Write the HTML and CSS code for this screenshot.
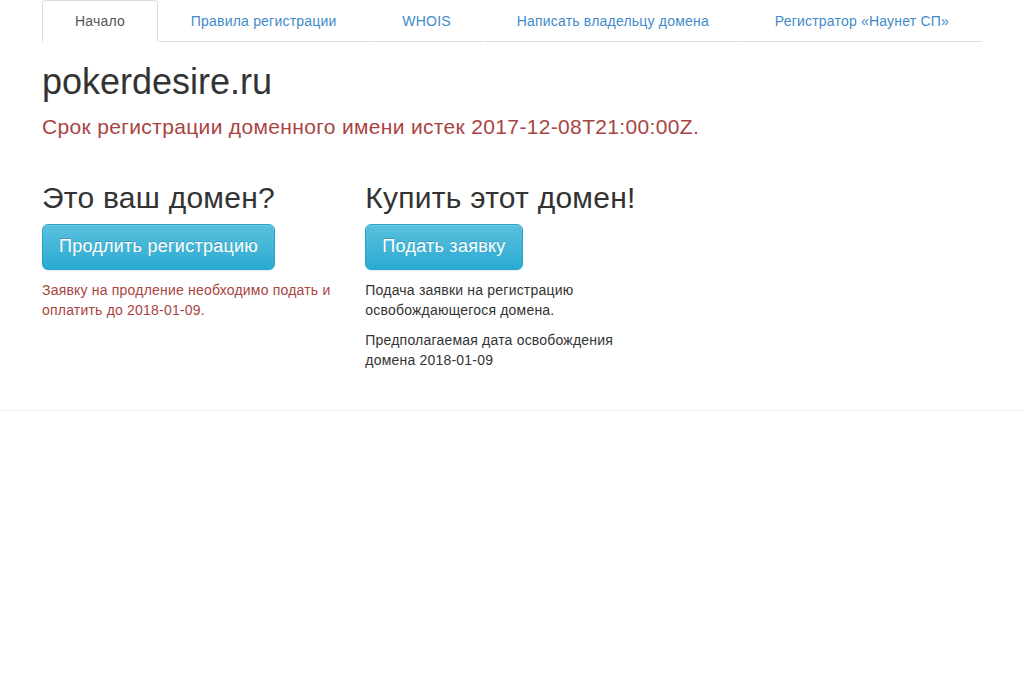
FILE: index.html
```html
<!DOCTYPE html>
<html lang="ru">
<head>
<meta charset="utf-8">
<title>pokerdesire.ru</title>
<link rel="stylesheet" href="styles.css">
</head>
<body>
<div class="container">
  <ul class="tabs">
    <li class="tab active"><a href="#">Начало</a></li>
    <li class="tab"><a href="#">Правила регистрации</a></li>
    <li class="tab"><a href="#">WHOIS</a></li>
    <li class="tab"><a href="#">Написать владельцу домена</a></li>
    <li class="tab"><a href="#">Регистратор «Наунет СП»</a></li>
  </ul>
  <h1 class="domain">pokerdesire.ru</h1>
  <p class="lead danger">Срок регистрации доменного имени истек 2017-12-08T21:00:00Z.</p>
  <div class="row">
    <div class="col">
      <h2>Это ваш домен?</h2>
      <div class="btn-wrap"><a class="btn" href="#">Продлить регистрацию</a></div>
      <p class="danger">Заявку на продление необходимо подать и оплатить до 2018-01-09.</p>
    </div>
    <div class="col">
      <h2>Купить этот домен!</h2>
      <div class="btn-wrap"><a class="btn" href="#">Подать заявку</a></div>
      <p>Подача заявки на регистрацию освобождающегося домена.</p>
      <p>Предполагаемая дата освобождения домена 2018-01-09</p>
    </div>
  </div>
</div>
<hr class="rule">
</body>
</html>
```

FILE: styles.css
```css
* { box-sizing: border-box; }
html, body { margin: 0; padding: 0; }
body {
  font-family: "Liberation Sans", Arial, sans-serif;
  font-size: 14px;
  line-height: 20px;
  letter-spacing: 0.2px;
  color: #333;
  background: #fff;
}
a { text-decoration: none; color: #428bca; }
.container {
  width: 970px;
  margin: 0 auto;
  padding: 0 15px;
}
.tabs {
  display: flex;
  width: 100%;
  margin: 0;
  padding: 0;
  list-style: none;
}
.tab {
  flex: 1 1 auto;
  text-align: center;
  white-space: nowrap;
}
.tab a {
  display: block;
  padding: 10px 15px;
  line-height: 20px;
  border: 1px solid transparent;
  border-bottom: 1px solid #ddd;
  border-radius: 4px 4px 0 0;
  color: #428bca;
}
.tab.active a {
  color: #555;
  background: #fff;
  border: 1px solid #ddd;
  border-bottom-color: #fff;
}
.domain {
  font-size: 36px;
  font-weight: 500;
  line-height: 1.1;
  letter-spacing: 0;
  margin: 20px 0 10px;
}
.lead {
  font-size: 21px;
  font-weight: 300;
  line-height: 1.4;
  letter-spacing: 0.34px;
  margin: 0 0 20px;
}
.danger { color: #a94442; }
.row {
  display: flex;
  margin: 0 -15px;
}
.col {
  width: 323.33px;
  padding: 0 15px;
}
h2 {
  font-size: 30px;
  font-weight: 500;
  line-height: 1.1;
  letter-spacing: 0.25px;
  margin: 20px 0 10px;
}
p { margin: 0 0 10px; }
.btn-wrap { margin: 0 0 10px; }
.btn {
  display: inline-block;
  padding: 10px 16px;
  font-size: 18px;
  line-height: 1.33;
  letter-spacing: 0.25px;
  border-radius: 6px;
  color: #fff;
  border: 1px solid #28a4c9;
  background-image: linear-gradient(to bottom, #5bc0de 0%, #2aabd2 100%);
  text-shadow: 0 -1px 0 rgba(0,0,0,.2);
  box-shadow: inset 0 1px 0 rgba(255,255,255,.15), 0 1px 1px rgba(0,0,0,.075);
}
.rule {
  border: 0;
  border-top: 1px solid #eee;
  margin: 30px 0 0;
}
```
